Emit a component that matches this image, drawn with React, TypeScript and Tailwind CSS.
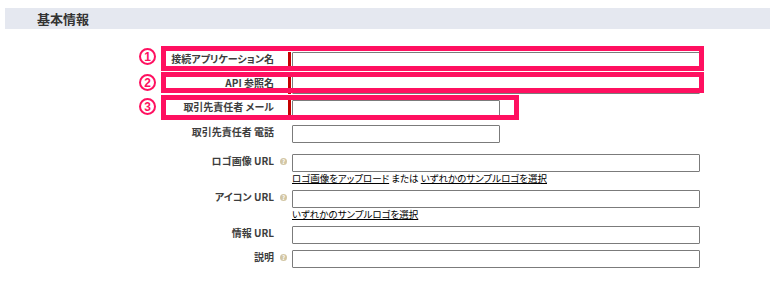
import React from 'react';

const jp = '"Noto Sans CJK JP", "Liberation Sans", sans-serif';

type RowProps = {
  label: string;
  required?: boolean;
  help?: boolean;
  short?: boolean;
  className?: string;
  children?: React.ReactNode;
};

function HelpIcon() {
  return (
    <span className="inline-flex w-[7px] h-[7px] rounded-full bg-[#d2c6a4] items-center justify-center text-[6px] leading-none font-bold text-white">
      ?
    </span>
  );
}

function Marker({ n, className }: { n: number; className: string }) {
  return (
    <span
      className={`absolute w-[17px] h-[17px] rounded-full border-2 border-[#ff1060] flex items-center justify-center text-[12px] leading-[12px] font-bold text-[#ff1060] font-['Liberation_Sans',sans-serif] ${className}`}
    >
      {n}
    </span>
  );
}

function Row({ label, required, help, short, className = '', children }: RowProps) {
  return (
    <div className={`flex items-start ${className}`}>
      <div className="w-[278px] text-right pr-[4px] pt-[1px] text-[10px] leading-[12px] font-bold text-[#3d3d3d] [font-feature-settings:'palt']">
        {label}
      </div>
      <div className="w-[10px] pt-[4px] pl-[2px] flex">{help && <HelpIcon />}</div>
      <div className="w-[4px] h-[18px]">
        {required && <div className="w-[3px] h-full bg-[#c40000]" />}
      </div>
      <div className="flex flex-col">
        <div
          className={`${short ? 'w-[208px]' : 'w-[408px]'} h-[18px] border border-[#7b7b7b] rounded-[1px] bg-white`}
        />
        {children}
      </div>
    </div>
  );
}

export default function App() {
  return (
    <div className="relative w-[771px] h-[290px] bg-white overflow-hidden" style={{ fontFamily: jp }}>
      {/* Section header */}
      <div className="mt-[8px] ml-[5px] mr-[1px] h-[21px] bg-[#e5e8f0] pl-[32px] flex items-center">
        <span className="text-[13px] font-bold text-[#333] [font-feature-settings:'palt']">基本情報</span>
      </div>

      {/* Form */}
      <div className="mt-[23px] flex flex-col gap-[6px]">
        <Row label="接続アプリケーション名" required />
        <Row label="API 参照名" required />
        <Row label="取引先責任者 メール" required short />
        <Row label="取引先責任者 電話" short className="mt-[1px]" />
        <Row label="ロゴ画像 URL" help className="mt-[5px]">
          <div className="text-[9.5px] leading-[12px] text-black [font-feature-settings:'palt']">
            <span className="underline">ロゴ画像をアップロード</span> または{' '}
            <span className="underline">いずれかのサンプルロゴを選択</span>
          </div>
        </Row>
        <Row label="アイコン URL" help>
          <div className="text-[9.5px] leading-[12px] text-black [font-feature-settings:'palt']">
            <span className="underline">いずれかのサンプルロゴを選択</span>
          </div>
        </Row>
        <Row label="情報 URL" />
        <Row label="説明" help />
      </div>

      {/* Annotation overlays */}
      <div className="absolute left-[161px] top-[46px] w-[543px] h-[25px] border-[5px] border-[#ff1060]" />
      <div className="absolute left-[161px] top-[72px] w-[543px] h-[21px] border-[5px] border-[#ff1060]" />
      <div className="absolute left-[161px] top-[95px] w-[358px] h-[25px] border-[5px] border-[#ff1060]" />
      <Marker n={1} className="left-[139px] top-[48px]" />
      <Marker n={2} className="left-[139px] top-[74px]" />
      <Marker n={3} className="left-[139px] top-[98px]" />
    </div>
  );
}
